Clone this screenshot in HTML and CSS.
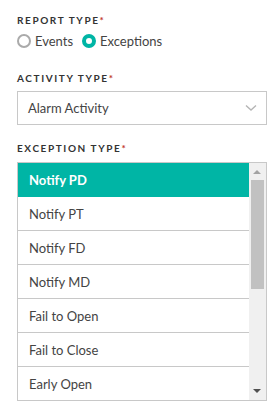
FILE: index.html
```html
<!DOCTYPE html>
<html>
<head>
<meta charset="utf-8">
<link rel="stylesheet" href="styles.css">
</head>
<body>
<div class="form">
  <div class="label">REPORT TYPE<span class="req">*</span></div>
  <div class="radios">
    <label class="radio"><span class="dot"></span>Events</label>
    <label class="radio"><span class="dot on"></span>Exceptions</label>
  </div>

  <div class="label l2">ACTIVITY TYPE<span class="req">*</span></div>
  <div class="select">
    <span>Alarm Activity</span>
    <svg class="chev" width="12" height="8" viewBox="0 0 12 8"><path d="M1 1.5 L6 6 L11 1.5" fill="none" stroke="#b5b5b5" stroke-width="1.4"/></svg>
  </div>

  <div class="label l3">EXCEPTION TYPE<span class="req">*</span></div>
  <div class="list">
    <div class="items">
      <div class="item sel">Notify PD</div>
      <div class="item">Notify PT</div>
      <div class="item">Notify FD</div>
      <div class="item">Notify MD</div>
      <div class="item">Fail to Open</div>
      <div class="item">Fail to Close</div>
      <div class="item">Early Open</div>
    </div>
    <div class="sb">
      <div class="arrow up"></div>
      <div class="thumb"></div>
      <div class="arrow down"></div>
    </div>
  </div>
</div>
</body>
</html>
```

FILE: styles.css
```css
* { box-sizing: border-box; }
html, body { margin: 0; padding: 0; background: #fff; }
body { font-family: Lato, "Open Sans", sans-serif; color: #444; }
.form { padding: 15px 12px 0 17px; }
.label {
  font-size: 10px; font-weight: 700; letter-spacing: 1.6px;
  color: #333; line-height: 10px; height: 10px;
}
.req { color: #c0392b; }
.radios { display: flex; align-items: center; margin-top: 9px; height: 14px; }
.radio { display: flex; align-items: center; font-size: 13px; color: #444; margin-right: 9px; }
.dot {
  width: 14px; height: 14px; border-radius: 50%;
  border: 2px solid #aaa; margin-right: 4px; flex: none;
}
.dot.on { border: 4.5px solid #00b5a5; background: #fff; }
.l2 { margin-top: 25px; }
.select {
  margin-top: 8px; height: 34px; border: 1px solid #c8c8c8;
  display: flex; align-items: center; justify-content: space-between;
  padding: 0 9px 0 10px; font-size: 13px; color: #444;
}
.chev { display: block; }
.l3 { margin-top: 18px; }
.list {
  margin-top: 9px; height: 239px; border: 1px solid #c8c8c8;
  display: flex; overflow: hidden;
}
.items { flex: 1; }
.item {
  height: 34px; border-bottom: 1px solid #c8c8c8;
  display: flex; align-items: center; padding-left: 11px;
  font-size: 13px; color: #444;
}
.item.sel { background: #00b5a5; color: #fff; font-weight: 700; border-bottom-color: #00b5a5; }
.sb { width: 17px; background: #f0f0f0; position: relative; flex: none; }
.thumb { position: absolute; left: 2px; right: 2px; top: 17px; height: 109px; background: #c1c1c1; }
.arrow { position: absolute; left: 4px; width: 0; height: 0; border-left: 4px solid transparent; border-right: 4px solid transparent; }
.arrow.up { top: 7px; border-bottom: 4px solid #a3a3a3; }
.arrow.down { bottom: 7px; border-top: 4px solid #505050; }
```
